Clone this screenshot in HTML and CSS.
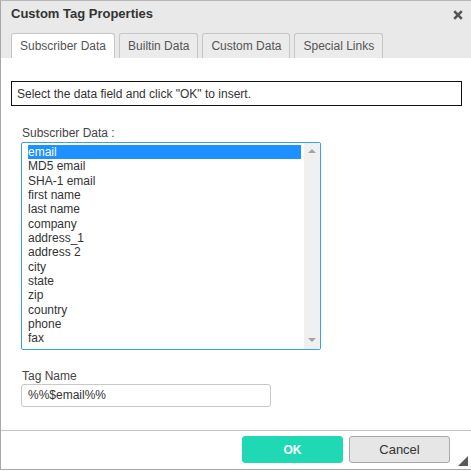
FILE: index.html
```html
<!DOCTYPE html>
<html>
<head>
<meta charset="utf-8">
<link rel="stylesheet" href="styles.css">
</head>
<body>
<div class="dialog">
  <div class="header">
    <div class="titlebar">
      <span class="title">Custom Tag Properties</span>
      <svg class="close" width="10" height="10" viewBox="0 0 10 10"><path d="M1.2 1.2 L8.8 8.8 M8.8 1.2 L1.2 8.8" stroke="#555" stroke-width="2.6" stroke-linecap="butt"/></svg>
    </div>
    <div class="tabs">
      <div class="tab active">Subscriber Data</div>
      <div class="tab">Builtin Data</div>
      <div class="tab">Custom Data</div>
      <div class="tab">Special Links</div>
    </div>
  </div>
  <div class="content">
    <div class="instruction">Select the data field and click "OK" to insert.</div>
    <div class="field-label">Subscriber Data :</div>
    <div class="listbox">
      <div class="items">
        <div class="item selected">email</div>
        <div class="item">MD5 email</div>
        <div class="item">SHA-1 email</div>
        <div class="item">first name</div>
        <div class="item">last name</div>
        <div class="item">company</div>
        <div class="item">address_1</div>
        <div class="item">address 2</div>
        <div class="item">city</div>
        <div class="item">state</div>
        <div class="item">zip</div>
        <div class="item">country</div>
        <div class="item">phone</div>
        <div class="item">fax</div>
      </div>
      <div class="scrollbar">
        <div class="arrow up"></div>
        <div class="arrow down"></div>
      </div>
    </div>
    <div class="field-label tag-label">Tag Name</div>
    <div class="input">%%$email%%</div>
  </div>
  <div class="footer">
    <button class="btn ok">OK</button>
    <button class="btn cancel">Cancel</button>
    <svg class="grip" width="10" height="10" viewBox="0 0 10 10"><polygon points="10,0 10,10 0,10" fill="#5a5a5a"/></svg>
  </div>
</div>
</body>
</html>
```
FILE: styles.css
```css
html, body {
  margin: 0;
  padding: 0;
  overflow: hidden;
  background: #ffffff;
}
body {
  font-family: "Liberation Sans", Arial, sans-serif;
  font-size: 12px;
  color: #333;
}
.dialog {
  width: 471px;
  height: 470px;
  box-sizing: border-box;
  border-left: 1px solid #a8a8a8;
  border-top: 1px solid #b8b8b8;
  border-bottom: 1px solid #a8a8a8;
  display: flex;
  flex-direction: column;
  background: #fff;
}
.header {
  background: #e9e9e9;
  height: 57px;
  flex: none;
  display: flex;
  flex-direction: column;
}
.titlebar {
  height: 32px;
  box-sizing: border-box;
  padding: 5px 8px 0 10px;
  display: flex;
  align-items: flex-start;
  justify-content: space-between;
}
.title {
  font-size: 13px;
  font-weight: bold;
  line-height: 16px;
  color: #333;
}
.close {
  margin-top: 4px;
}
.tabs {
  display: flex;
  gap: 4px;
  padding-left: 10px;
  height: 25px;
}
.tab {
  box-sizing: border-box;
  height: 25px;
  padding: 5px 8px 0 8px;
  line-height: 14px;
  border: 1px solid #c6c6c6;
  border-bottom: none;
  border-radius: 3px 3px 0 0;
  background: #ebebeb;
  color: #555;
}
.tab.active {
  background: #fff;
}
.content {
  height: 372px;
  flex: none;
  box-sizing: border-box;
  padding: 23px 9px 0 10px;
  display: flex;
  flex-direction: column;
  align-items: flex-start;
}
.instruction {
  box-sizing: border-box;
  width: 451px;
  height: 25px;
  border: 1px solid #111;
  padding: 5px 5px 0 5px;
  line-height: 14px;
  color: #333;
}
.field-label {
  margin: 20px 0 0 11px;
  line-height: 14px;
  color: #444;
}
.tag-label {
  margin-top: 19px;
}
.listbox {
  margin: 2px 0 0 10px;
  box-sizing: border-box;
  width: 300px;
  height: 208px;
  border: 1px solid #3a9ef2;
  border-radius: 2px;
  display: flex;
}
.items {
  flex: 1;
  padding: 2px 3px 0 6px;
}
.item {
  line-height: 14.33px;
  height: 14.33px;
  color: #333;
  white-space: nowrap;
}
.item.selected {
  background: #1e90ff;
  color: #fff;
}
.scrollbar {
  width: 16px;
  background: #f0f0f0;
  display: flex;
  flex-direction: column;
  justify-content: space-between;
  align-items: center;
  padding: 6px 0 7px 0;
}
.arrow {
  width: 0;
  height: 0;
  border-left: 4px solid transparent;
  border-right: 4px solid transparent;
}
.arrow.up {
  border-bottom: 4px solid #a3a3a3;
}
.arrow.down {
  border-top: 4px solid #a3a3a3;
}
.input {
  margin: 1px 0 0 10px;
  box-sizing: border-box;
  width: 250px;
  height: 23px;
  border: 1px solid #c8c8c8;
  border-radius: 3px;
  padding: 3px 6px 0 6px;
  line-height: 14px;
  color: #333;
}
.footer {
  flex: 1;
  border-top: 1px solid #c4c4c4;
  display: flex;
  align-items: flex-start;
  padding: 5px 0 0 241px;
  position: relative;
}
.btn {
  width: 101px;
  height: 27px;
  box-sizing: border-box;
  border-radius: 3px;
  font-family: "Liberation Sans", Arial, sans-serif;
  padding: 0;
  margin: 0;
}
.ok {
  background: #1fd8b4;
  border: 1px solid #1fd8b4;
  color: #fff;
  font-weight: bold;
  font-size: 12px;
}
.cancel {
  margin-left: 6px;
  background: #e6e6e6;
  border: 1px solid #a8a8a8;
  color: #333;
  font-size: 13px;
}
.grip {
  position: absolute;
  right: 3px;
  bottom: 3px;
}
```
